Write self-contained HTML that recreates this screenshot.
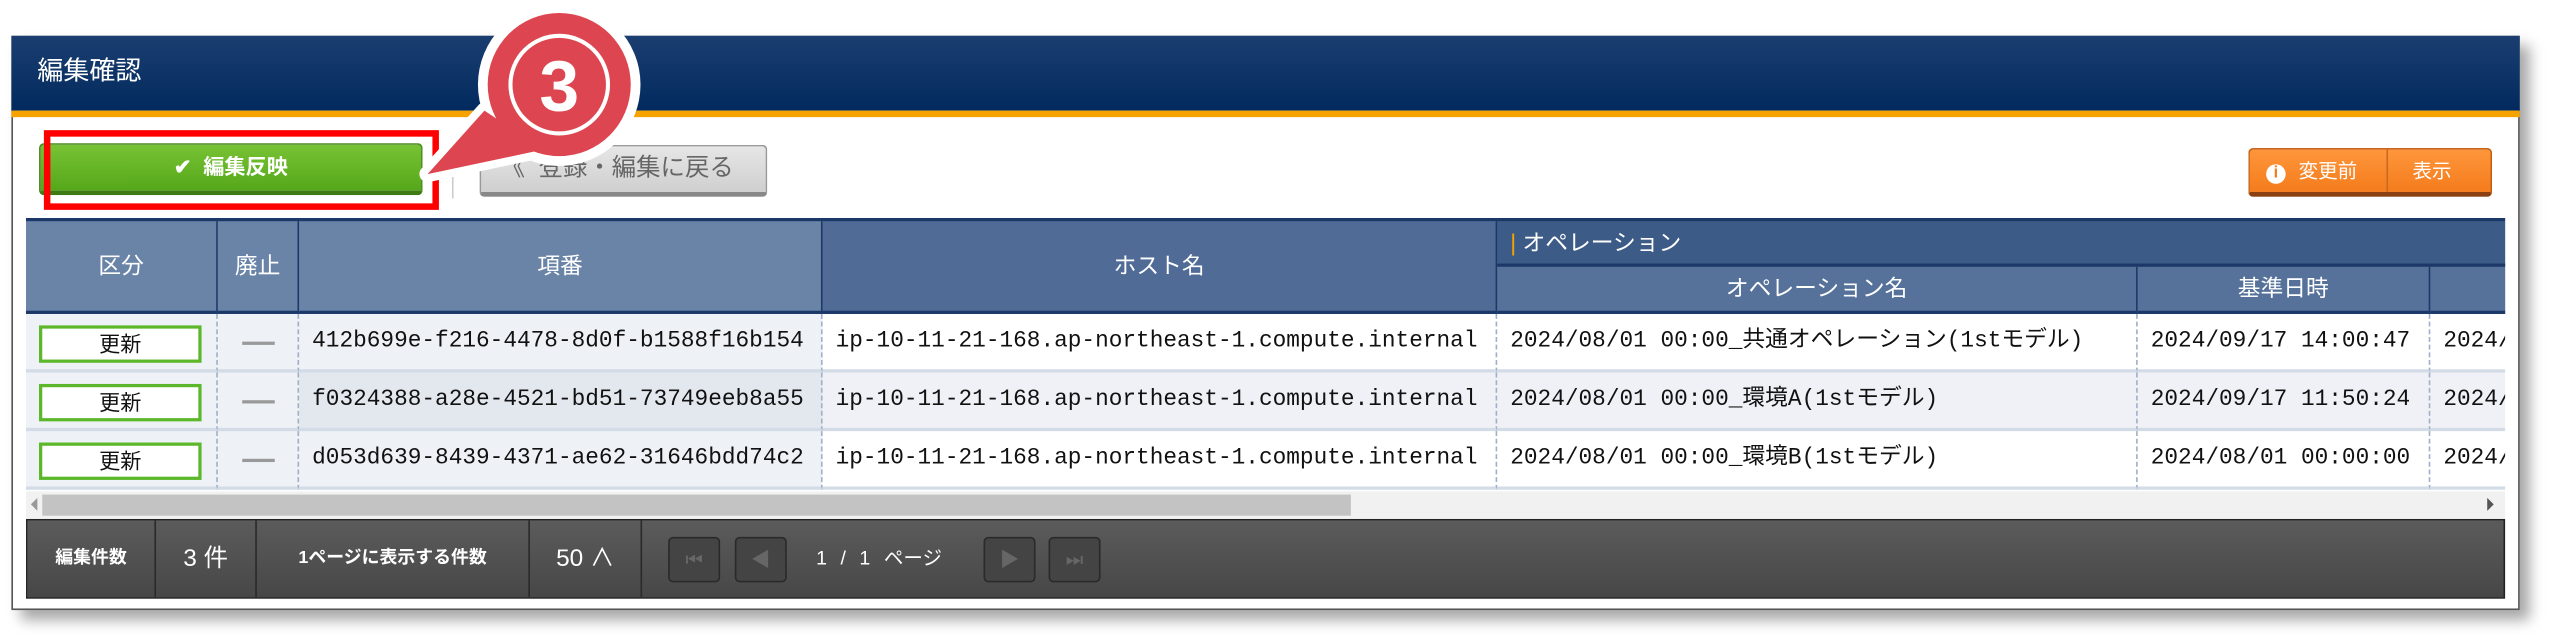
<!DOCTYPE html>
<html><head><meta charset="utf-8"><style>
*{margin:0;padding:0;box-sizing:border-box}
html,body{width:2549px;height:641px;background:#fff;overflow:hidden}
#s{position:absolute;left:0;top:0;width:1568px;height:394px;transform:scale(1.62564,1.62690);transform-origin:0 0;font-family:"Liberation Sans","Noto Sans CJK JP",sans-serif}
.a{position:absolute}
.panel{left:7px;top:22px;width:1543px;height:353px;background:#fff;border:1px solid #555;box-shadow:6px 6px 8px rgba(0,0,0,.35)}
.hdr{left:7px;top:22px;width:1543px;height:46px;background:linear-gradient(#1b3e70,#022a5e);color:#fff;font-size:16px;line-height:46px;padding-left:16px}
.org{left:7px;top:68px;width:1543px;height:4px;background:#f6a300}
.gbtn{left:24px;top:88px;width:236px;height:32px;border-radius:3px;background:linear-gradient(#78c235,#55a81a);border:1px solid #4b8a1e;border-bottom:3px solid #3d7a14;color:#fff;font-size:13px;font-weight:bold;text-align:center;line-height:28px}
.red{left:27px;top:80px;width:243px;height:49px;border:4px solid #f00}
.gray{left:295px;top:89px;width:177px;height:32px;border-radius:3px;background:linear-gradient(#e6e6e6,#cfcfcf);border:1px solid #999;border-bottom:3px solid #888;color:#666;font-size:15px;line-height:28px;padding-left:12px}
.obtn{left:1383px;top:91px;width:150px;height:30px;border-radius:3px;background:linear-gradient(#ff963c,#f47c1c);border:1px solid #c55e10;border-bottom:3px solid #8a4010;color:#fff;font-size:12px;line-height:26px}
.th{position:absolute;color:#fff;font-size:14px;text-align:center;border-right:1px solid #1c3868;border-bottom:2px solid #1c3868}
.td{position:absolute;font-family:"Liberation Mono","Noto Sans CJK JP",monospace;font-size:14px;color:#111;line-height:35px;white-space:nowrap;overflow:hidden;border-right:1px dashed #9fb0c8;border-bottom:2px solid #d3dbe7}
.upd{position:absolute;left:24px;width:100px;height:23px;border:2px solid #5cb82a;background:#fff;font-size:13px;text-align:center;line-height:19px;color:#111}
.dash{position:absolute;left:149px;width:20px;height:2px;background:#999}
.ft{position:absolute;top:320px;height:47px;color:#fff;font-size:11px;font-weight:bold;line-height:47px;text-align:center;border-right:1px solid #2a2a2a}
.pg{position:absolute;top:330px;width:32px;height:28px;border:1px solid #2a2a2a;border-radius:3px;background:#444;color:#666;font-size:12px;text-align:center;line-height:26px}
</style></head><body><div id="s">
<div class="a panel"></div>
<div class="a hdr">編集確認</div>
<div class="a org"></div>
<div class="a gbtn">✔&nbsp; 編集反映</div>
<div class="a" style="left:278px;top:86px;width:1px;height:36px;background:#ccc"></div>
<div class="a gray">《&nbsp; 登録・編集に戻る</div>
<div class="a obtn"><span style="display:inline-block;width:12px;height:12px;border-radius:6px;background:#fff;color:#f47c1c;font-size:10px;line-height:12px;text-align:center;margin:0 8px 0 10px;font-weight:bold">i</span>変更前<span style="position:absolute;left:84px;top:0;width:1px;height:26px;background:#c96a20"></span><span style="position:absolute;left:100px">表示</span></div>

<div class="a" style="left:16px;top:134px;width:1525px;height:59px;background:#3c5a86;border-top:2px solid #1c3868"></div>
<div class="th" style="left:16px;top:136px;width:118px;height:57px;line-height:55px;background:#6a84a8">区分</div>
<div class="th" style="left:134px;top:136px;width:50px;height:57px;line-height:55px;background:#6a84a8">廃止</div>
<div class="th" style="left:184px;top:136px;width:322px;height:57px;line-height:55px;background:#6a84a8">項番</div>
<div class="th" style="left:506px;top:136px;width:415px;height:57px;line-height:55px;background:#4f6b96">ホスト名</div>
<div class="th" style="left:921px;top:136px;width:620px;height:28px;line-height:26px;background:#3d5b87;text-align:left;padding-left:8px;border-right:none"><span style="color:#f6a300">|</span> オペレーション</div>
<div class="th" style="left:921px;top:164px;width:394px;height:29px;line-height:27px;background:#56729b">オペレーション名</div>
<div class="th" style="left:1315px;top:164px;width:180px;height:29px;line-height:27px;background:#56729b">基準日時</div>
<div class="th" style="left:1495px;top:164px;width:46px;height:29px;background:#56729b;border-right:none"></div>

<div class="a" style="left:16px;top:193px;width:1525px;height:108px;background:#fff"></div>
<div class="a" style="left:16px;top:229px;width:1525px;height:36px;background:#eff1f6"></div>
<div class="a" style="left:16px;top:193px;width:490px;height:108px;background:#eef1f6"></div>
<div class="a" style="left:184px;top:229px;width:322px;height:36px;background:#e3e8ef"></div>

<div class="td" style="left:16px;top:193px;width:118px;height:36px"></div>
<div class="td" style="left:134px;top:193px;width:50px;height:36px"></div>
<div class="td" style="left:184px;top:193px;width:322px;height:36px;padding-left:8px">412b699e-f216-4478-8d0f-b1588f16b154</div>
<div class="td" style="left:506px;top:193px;width:415px;height:36px;padding-left:8px">ip-10-11-21-168.ap-northeast-1.compute.internal</div>
<div class="td" style="left:921px;top:193px;width:394px;height:36px;padding-left:8px">2024/08/01 00:00_共通オペレーション(1stモデル)</div>
<div class="td" style="left:1315px;top:193px;width:180px;height:36px;padding-left:8px">2024/09/17 14:00:47</div>
<div class="td" style="left:1495px;top:193px;width:46px;height:36px;padding-left:8px;border-right:none">2024/</div>

<div class="td" style="left:16px;top:229px;width:118px;height:36px"></div>
<div class="td" style="left:134px;top:229px;width:50px;height:36px"></div>
<div class="td" style="left:184px;top:229px;width:322px;height:36px;padding-left:8px">f0324388-a28e-4521-bd51-73749eeb8a55</div>
<div class="td" style="left:506px;top:229px;width:415px;height:36px;padding-left:8px">ip-10-11-21-168.ap-northeast-1.compute.internal</div>
<div class="td" style="left:921px;top:229px;width:394px;height:36px;padding-left:8px">2024/08/01 00:00_環境A(1stモデル)</div>
<div class="td" style="left:1315px;top:229px;width:180px;height:36px;padding-left:8px">2024/09/17 11:50:24</div>
<div class="td" style="left:1495px;top:229px;width:46px;height:36px;padding-left:8px;border-right:none">2024/</div>

<div class="td" style="left:16px;top:265px;width:118px;height:36px"></div>
<div class="td" style="left:134px;top:265px;width:50px;height:36px"></div>
<div class="td" style="left:184px;top:265px;width:322px;height:36px;padding-left:8px">d053d639-8439-4371-ae62-31646bdd74c2</div>
<div class="td" style="left:506px;top:265px;width:415px;height:36px;padding-left:8px">ip-10-11-21-168.ap-northeast-1.compute.internal</div>
<div class="td" style="left:921px;top:265px;width:394px;height:36px;padding-left:8px">2024/08/01 00:00_環境B(1stモデル)</div>
<div class="td" style="left:1315px;top:265px;width:180px;height:36px;padding-left:8px">2024/08/01 00:00:00</div>
<div class="td" style="left:1495px;top:265px;width:46px;height:36px;padding-left:8px;border-right:none">2024/</div>

<div class="upd" style="top:200px">更新</div>
<div class="upd" style="top:236px">更新</div>
<div class="upd" style="top:272px">更新</div>
<div class="dash" style="top:210px"></div>
<div class="dash" style="top:246px"></div>
<div class="dash" style="top:282px"></div>

<div class="a" style="left:16px;top:302px;width:1525px;height:17px;background:#f1f1f1"></div>
<div class="a" style="left:26px;top:304px;width:805px;height:13px;background:#c3c3c3"></div>
<div class="a" style="left:19px;top:306px;width:0;height:0;border-top:4px solid transparent;border-bottom:4px solid transparent;border-right:4px solid #999"></div>
<div class="a" style="left:1530px;top:306px;width:0;height:0;border-top:4px solid transparent;border-bottom:4px solid transparent;border-left:4px solid #555"></div>

<div class="a" style="left:16px;top:319px;width:1525px;height:49px;background:linear-gradient(#5a5b5a,#474747);border:1px solid #222"></div>
<div class="ft" style="left:17px;width:79px">編集件数</div>
<div class="ft" style="left:96px;width:62px;font-weight:normal;font-size:15px">3 件</div>
<div class="ft" style="left:158px;width:168px">1ページに表示する件数</div>
<div class="ft" style="left:326px;width:69px;font-weight:normal;font-size:15px">50 ∧</div>
<div class="pg" style="left:411px">⏮</div>
<div class="pg" style="left:452px">◀</div>
<div class="a" style="left:502px;top:320px;height:47px;line-height:47px;color:#fff;font-size:12px;word-spacing:5px">1 / 1 ページ</div>
<div class="pg" style="left:605px">▶</div>
<div class="pg" style="left:645px">⏭</div>

<div class="a red"></div>

<svg class="a" style="left:0;top:0" width="1568" height="394">
<polygon points="298,68 334,92 263,107" fill="#fff" stroke="#fff" stroke-width="10" stroke-linejoin="round"/>
<circle cx="344" cy="52" r="50" fill="#fff"/>
<polygon points="298,68 334,92 263,107" fill="#dd4650"/>
<circle cx="344" cy="52" r="44" fill="#dd4650"/>
<circle cx="344" cy="52" r="30" fill="none" stroke="#fff" stroke-width="2.5"/>
<text x="344" y="68" text-anchor="middle" font-family="Liberation Sans, sans-serif" font-weight="bold" font-size="44" fill="#fff">3</text>
</svg>
</div></body></html>
